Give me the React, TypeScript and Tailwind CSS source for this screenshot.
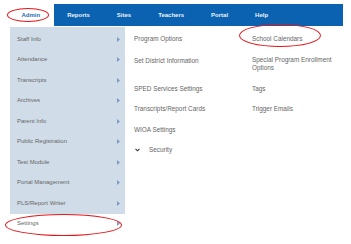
const navItems = ['Reports', 'Sites', 'Teachers', 'Portal', 'Help'];

const sideItems = [
  'Staff Info',
  'Attendance',
  'Transcripts',
  'Archives',
  'Parent Info',
  'Public Registration',
  'Test Module',
  'Portal Management',
  'PLS/Report Writer',
];

const leftLinks = ['Program Options', 'Set District Information', 'SPED Services Settings', 'Transcripts/Report Cards', 'WIOA Settings'];

const Arrow = () => (
  <svg width="3" height="5" viewBox="0 0 3 5" className="shrink-0">
    <path d="M0 0L3 2.5L0 5Z" fill="#7f9cc4" />
  </svg>
);

const SideRow = ({ label, white }: { label: string; white?: boolean }) => (
  <div className={`flex h-[20.5px] items-center justify-between pl-[7px] pr-[5px] ${white ? 'bg-white' : ''}`}>
    <span>{label}</span>
    <Arrow />
  </div>
);

const App = () => {
  return (
    <div className="relative h-[244px] w-[351px] overflow-hidden bg-white font-['Liberation_Sans',Arial,sans-serif] text-[6px] text-[#666]">
      {/* Top nav */}
      <div className="ml-[8px] mr-[8px] mt-[4px] flex h-[22px]">
        <div className="relative flex items-center bg-white px-[13.5px] font-bold text-[#1f6cb5]">
          Admin
          <span className="absolute left-[-1px] top-[4px] h-[14px] w-[42px] rounded-[50%] border border-[#e3151a]" />
        </div>
        <div className="flex flex-1 items-center bg-[#0a62b0] font-bold text-[#eef4fb]">
          {navItems.map((n) => (
            <span key={n} className="px-[13.5px]">
              {n}
            </span>
          ))}
        </div>
      </div>

      <div className="mt-[1px] flex">
        {/* Sidebar */}
        <div className="relative ml-[10px] w-[115px]">
          <div className="bg-[#d0dce8] pt-[2px]">
            {sideItems.map((s) => (
              <SideRow key={s} label={s} />
            ))}
          </div>
          <SideRow label="Settings" white />
          <span className="absolute left-[-5px] top-[187px] h-[22px] w-[117px] rounded-[50%] border border-[#e3151a]" />
        </div>

        {/* Submenu */}
        <div className="flex pl-[9px] pt-[2px] text-[6.4px]">
          <div className="w-[118px]">
            {leftLinks.map((l, i) => (
              <div key={l} className={`flex items-center ${i === 1 ? 'h-[29px] items-start pt-[6.5px]' : 'h-[20.5px]'}`}>
                {l}
              </div>
            ))}
            <div className="flex h-[20.5px] items-center gap-[9px] pl-[1px]">
              <svg width="5" height="4" viewBox="0 0 5 4">
                <path d="M0.5 0.8L2.5 2.8L4.5 0.8" fill="none" stroke="#333" strokeWidth="1.1" />
              </svg>
              <span>Security</span>
            </div>
          </div>
          <div className="w-[82px] leading-[8.5px]">
            <div className="relative flex h-[20.5px] items-center">
              School Calendars
              <span className="absolute left-[-13px] top-[-5px] h-[23px] w-[82px] rounded-[50%] border border-[#e3151a]" />
            </div>
            <div className="flex h-[29px] items-start pt-[6px]">Special Program Enrollment Options</div>
            <div className="flex h-[20.5px] items-center">Tags</div>
            <div className="flex h-[20.5px] items-center">Trigger Emails</div>
          </div>
        </div>
      </div>
    </div>
  );
};

export default App;
